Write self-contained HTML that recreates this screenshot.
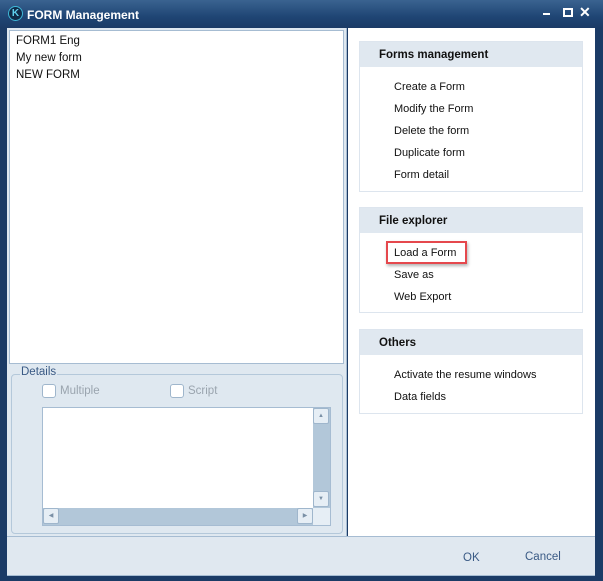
<!DOCTYPE html>
<html><head><style>
*{margin:0;padding:0;box-sizing:border-box}
body{width:603px;height:581px;background:#1b3b66;font-family:"Liberation Sans",sans-serif;font-size:11px;position:relative;overflow:hidden}
.a{position:absolute}
.title{left:0;top:0;width:603px;height:28px;background:linear-gradient(#3a6390,#1f4574 60%,#1b3b66)}
.grp{position:absolute;left:359px;width:224px;border:1px solid #dde5ee;background:#fff}
.hd{height:25px;background:#e0e8f0;font-weight:bold;font-size:11.5px;padding:7px 0 0 19px;color:#111}
.it{position:absolute;left:34px;color:#111}
</style></head><body>
<div class="a title"></div>
<div class="a" style="left:8px;top:6px;width:15px;height:15px;border-radius:50%;background:#0f2a48;border:1px solid #3fb8d8;color:#5fd0ef;font-size:10px;font-weight:bold;text-align:center;line-height:13px">K</div>
<div class="a" style="left:27px;top:8px;color:#fff;font-weight:bold;font-size:12px">FORM Management</div>
<div class="a" style="left:543px;top:13px;width:7px;height:2px;background:#fff"></div>
<div class="a" style="left:563px;top:8px;width:10px;height:9px;border:2px solid #fff"></div>
<div class="a" style="left:579px;top:4px;color:#fff;font-weight:bold;font-size:14px">✕</div>
<div class="a" style="left:7px;top:28px;width:340px;height:509px;background:#dfe8f0;border-right:1px solid #a6bcd2"></div>
<div class="a" style="left:9px;top:30px;width:335px;height:334px;background:#fff;border:1px solid #a6bcd2"></div>
<div class="a" style="left:16px;top:33px;font-size:11.5px;line-height:17px;color:#111">FORM1 Eng<br>My new form<br>NEW FORM</div>
<div class="a" style="left:11px;top:374px;width:332px;height:160px;border:1px solid #b4c8da;border-radius:4px"></div>
<div class="a" style="left:20px;top:366px;background:#dfe8f0;color:#3a5a85;padding:0 1px;font-size:11.5px">Details</div>
<div class="a" style="left:42px;top:384px;width:14px;height:14px;border:1px solid #9fb6cc;border-radius:3px;background:#fff"></div>
<div class="a" style="left:60px;top:385px;color:#9aa4ae;font-size:11.5px">Multiple</div>
<div class="a" style="left:170px;top:384px;width:14px;height:14px;border:1px solid #9fb6cc;border-radius:3px;background:#fff"></div>
<div class="a" style="left:188px;top:385px;color:#9aa4ae;font-size:11.5px">Script</div>
<div class="a" style="left:42px;top:407px;width:289px;height:119px;background:#fff;border:1px solid #a6bcd2"></div>
<div class="a" style="left:313px;top:408px;width:17px;height:100px;background:#b2c7d9"></div>
<div class="a" style="left:313px;top:408px;width:16px;height:16px;background:#e6eef5;border:1px solid #9fb6cc;border-radius:2px;font-size:6px;color:#7a90a6;text-align:center;line-height:14px">▲</div>
<div class="a" style="left:313px;top:491px;width:16px;height:16px;background:#e6eef5;border:1px solid #9fb6cc;border-radius:2px;font-size:6px;color:#7a90a6;text-align:center;line-height:14px">▼</div>
<div class="a" style="left:43px;top:508px;width:270px;height:17px;background:#b2c7d9"></div>
<div class="a" style="left:43px;top:508px;width:16px;height:16px;background:#e6eef5;border:1px solid #9fb6cc;border-radius:2px;font-size:6px;color:#7a90a6;text-align:center;line-height:14px">◀</div>
<div class="a" style="left:297px;top:508px;width:16px;height:16px;background:#e6eef5;border:1px solid #9fb6cc;border-radius:2px;font-size:6px;color:#7a90a6;text-align:center;line-height:14px">▶</div>
<div class="a" style="left:313px;top:508px;width:17px;height:17px;background:#e6eef5"></div>
<div class="a" style="left:348px;top:28px;width:247px;height:509px;background:#fff"></div>
<div class="grp" style="top:41px;height:151px"><div class="hd">Forms management</div>
<div class="it" style="top:39px">Create a Form</div><div class="it" style="top:61px">Modify the Form</div><div class="it" style="top:83px">Delete the form</div><div class="it" style="top:105px">Duplicate form</div><div class="it" style="top:127px">Form detail</div></div>
<div class="grp" style="top:207px;height:106px"><div class="hd">File explorer</div>
<div class="a" style="left:26px;top:33px;width:81px;height:23px;border:2px solid #e5484d;box-shadow:1px 2px 3px rgba(0,0,0,.3)"></div>
<div class="it" style="top:39px">Load a Form</div><div class="it" style="top:61px">Save as</div><div class="it" style="top:83px">Web Export</div></div>
<div class="grp" style="top:329px;height:85px"><div class="hd">Others</div>
<div class="it" style="top:39px">Activate the resume windows</div><div class="it" style="top:61px">Data fields</div></div>
<div class="a" style="left:7px;top:536px;width:588px;height:40px;background:#e0e8f0;border-top:1px solid #a6bcd2;border-bottom:1px solid #a6bcd2"></div>
<div class="a" style="left:463px;top:552px;color:#3a5a85;font-size:11.5px">OK</div>
<div class="a" style="left:525px;top:551px;color:#3a5a85;font-size:11.5px">Cancel</div>
</body></html>
